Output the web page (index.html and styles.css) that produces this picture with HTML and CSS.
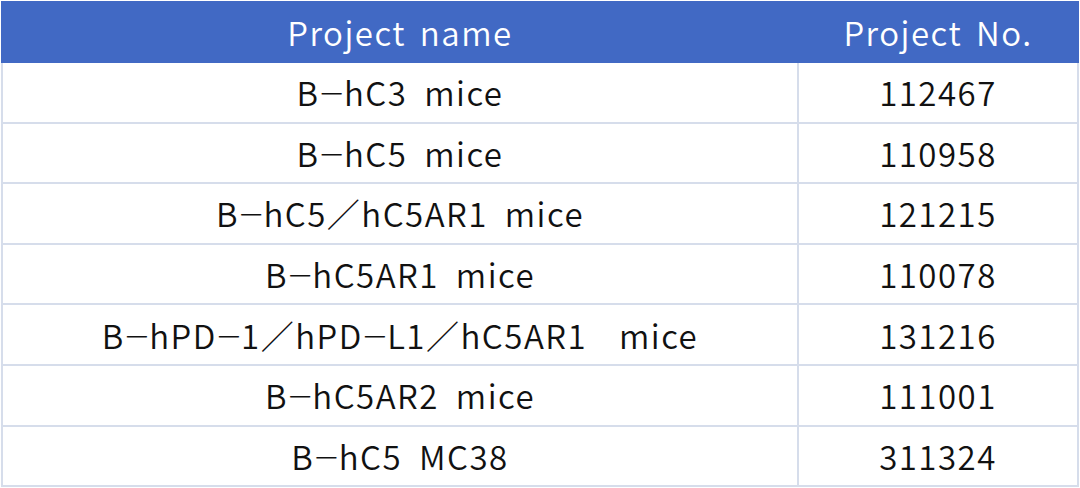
FILE: index.html
```html
<!DOCTYPE html>
<html lang="en">
<head>
<meta charset="utf-8">
<link rel="stylesheet" href="styles.css">
</head>
<body>
<div class="wrap">
<table class="grid">
<thead>
<tr><th class="name">Project name</th><th class="no">Project No.</th></tr>
</thead>
<tbody>
<tr><td>B<span class="d">—</span>hC3 mice</td><td>112467</td></tr>
<tr><td>B<span class="d">—</span>hC5 mice</td><td>110958</td></tr>
<tr><td>B<span class="d">—</span>hC5／hC5AR1 mice</td><td>121215</td></tr>
<tr><td>B<span class="d">—</span>hC5AR1 mice</td><td>110078</td></tr>
<tr><td>B<span class="d">—</span>hPD<span class="d">—</span>1／hPD<span class="d">—</span>L1／hC5AR1 <span class="wide">mice</span></td><td>131216</td></tr>
<tr><td>B<span class="d">—</span>hC5AR2 mice</td><td>111001</td></tr>
<tr><td>B<span class="d">—</span>hC5 MC38</td><td>311324</td></tr>
</tbody>
</table>
</div>
</body>
</html>
```

FILE: styles.css
```css
html, body {
  margin: 0;
  padding: 0;
  background: #ffffff;
}
.wrap {
  padding: 1px 1px 0 1px;
}
.grid {
  width: 1078px;
  border-collapse: collapse;
  table-layout: fixed;
  font-family: "Noto Sans CJK KR", "Noto Sans", sans-serif;
  font-size: 33px;
  color: #111111;
  letter-spacing: 1.5px;
}
.grid th, .grid td {
  border: 2px solid #d6ddeb;
  text-align: center;
  padding: 0;
  height: 58.6px;
  font-weight: 350;
  white-space: pre;
  word-spacing: 8px;
}
.grid th {
  background: #4169c4;
  color: #ffffff;
  border-color: #4169c4;
  height: 58px;
  word-spacing: 5px;
}
.grid .name { width: auto; }
.grid .no { width: 278px; }
.d {
  font-size: 25px;
  font-weight: 400;
  letter-spacing: 0;
  vertical-align: 5px;
  margin: 0 1px;
}
.wide {
  margin-left: 15px;
}
```
